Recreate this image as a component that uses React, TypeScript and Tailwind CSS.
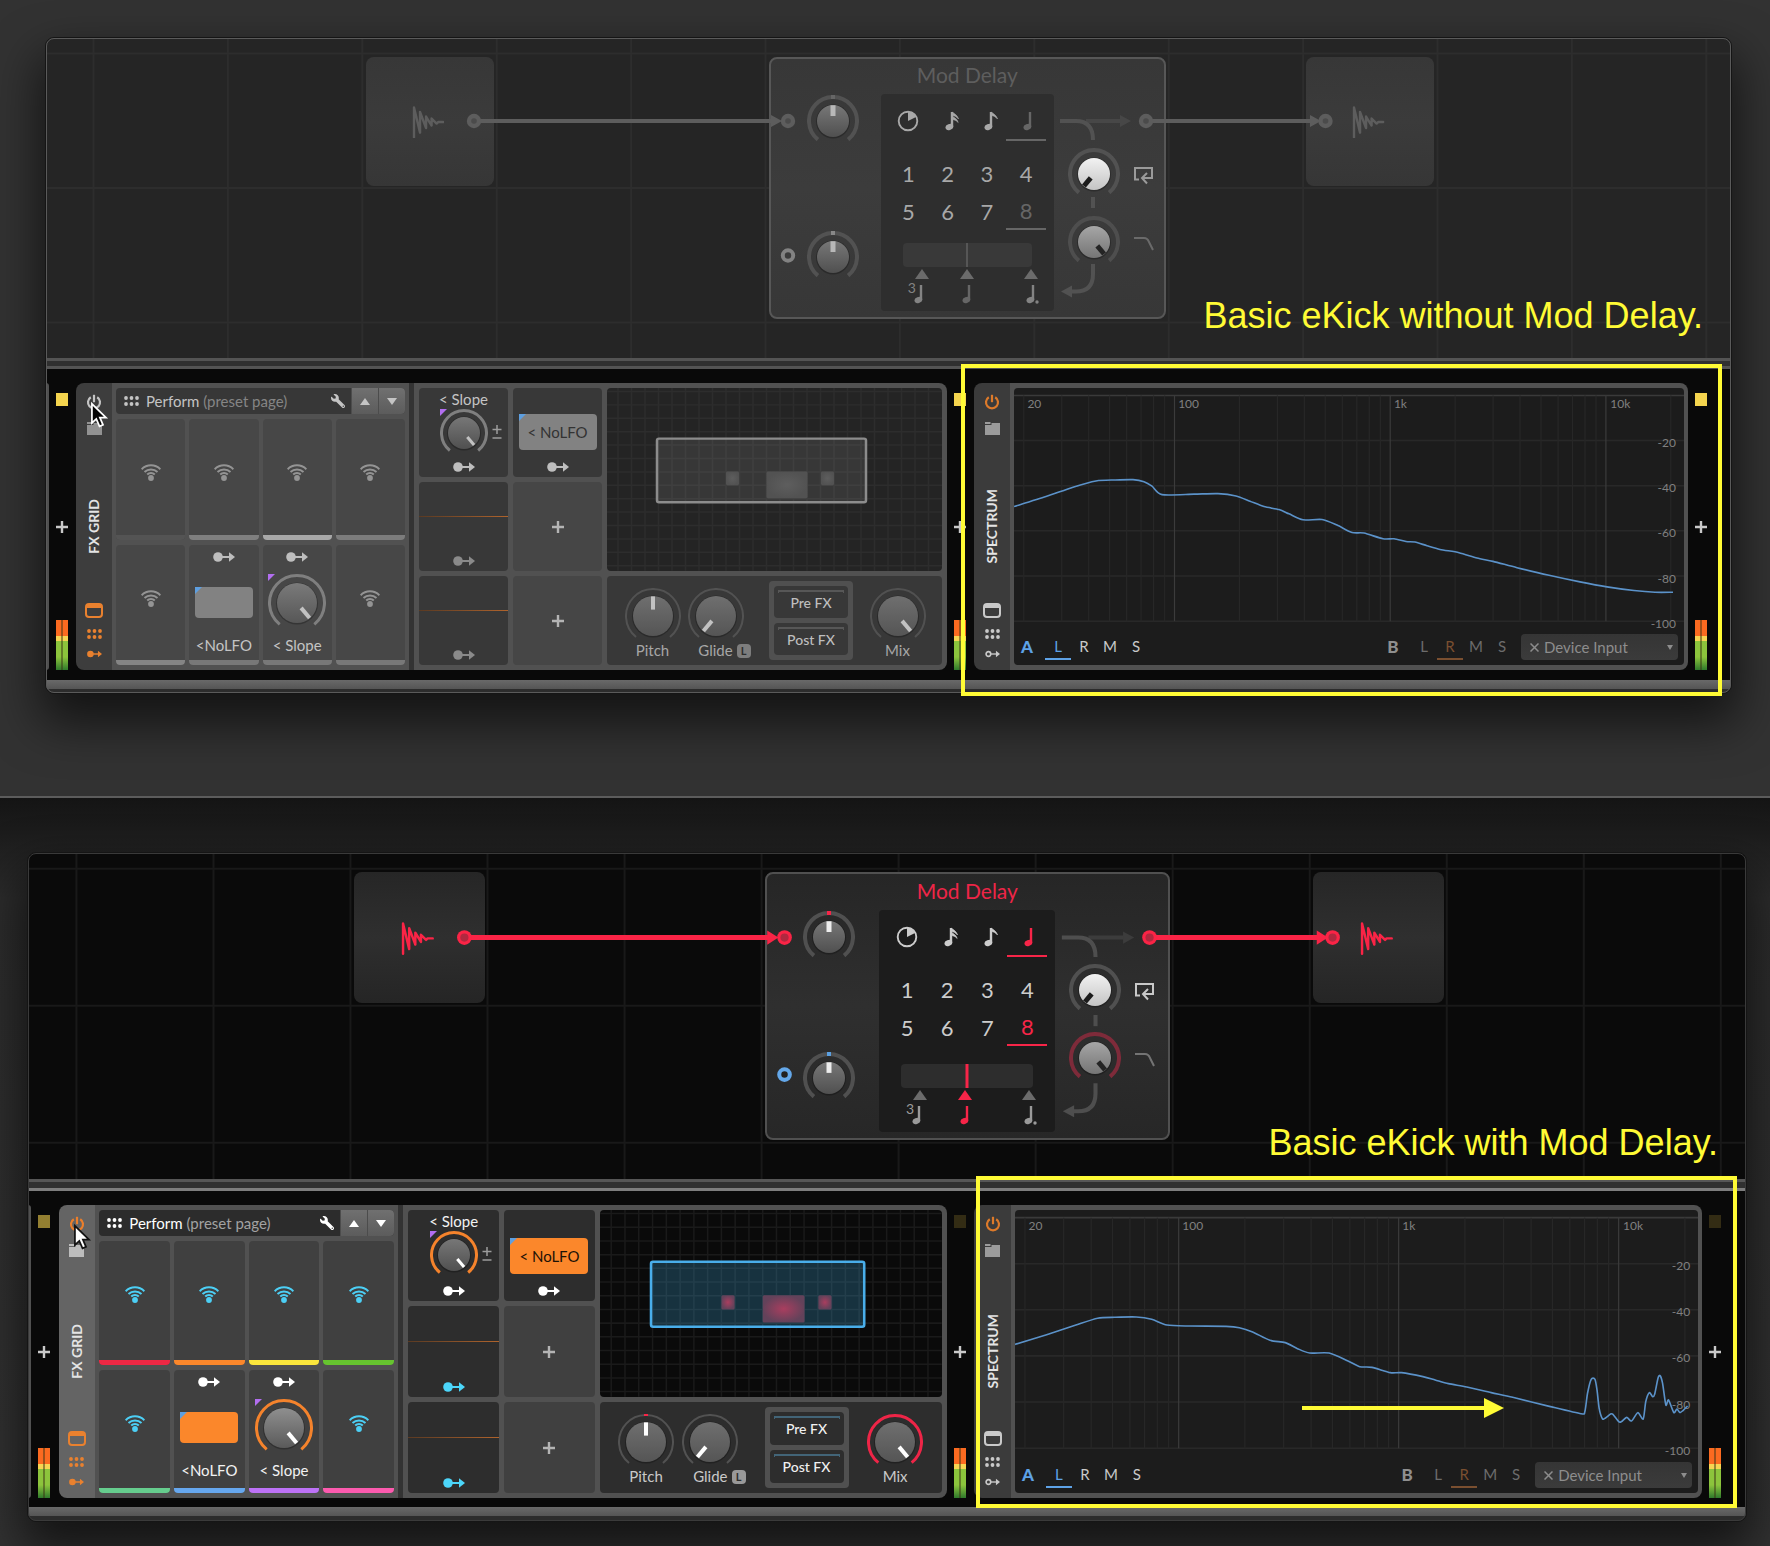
import { useId, type ReactNode } from "react";
import { FaWrench } from "react-icons/fa";

type Theme = {
  on: boolean;
  canvas: string;
  canvasHeight: string;
  deviceHeight: string;
  frame: string;
  gridLine: string;
  node: string;
  module: string;
  title: string;
  display: string;
  number: string;
  selected: string;
  underline: string;
  wire: string;
  portCore: string;
  modPort: string;
  modPortCore: string;
  flow: string;
  flowDim: string;
  rail: string;
  sidebar: string;
  header: string;
  headerText: string;
  pad: string;
  cell: string;
  addCell: string;
  wifi: string;
  modIcon: string;
  modIconIdle: string;
  toggle: string;
  toggleText: string;
  label: string;
  fxLabel: string;
  accent: string;
  pointer: string;
  red: string;
  filterRing: string;
  mixRing: string;
  gridBg: string;
  gridLines: string;
  view: string;
  viewFill: string;
  block: string;
  blockEdge: string;
  bars: string[];
  leds: string[];
  power: string;
};

const OFF: Theme = {
  on: false,
  canvas: "bg-[#252525]",
  canvasHeight: "h-[320px]",
  deviceHeight: "h-[287px]",
  frame: "border-[#5a5a5a]",
  gridLine: "#2d2d2d",
  node: "bg-linear-to-b from-[#373737] via-[#3b3b3b] to-[#363636]",
  module: "border-[#575757] bg-linear-to-b from-[#373737] via-[#3c3c3c] to-[#373737]",
  title: "text-[#5e5e5e]",
  display: "bg-[#2e2e2e]",
  number: "text-[#a8a8a8]",
  selected: "text-[#666666]",
  underline: "border-[#666666]",
  wire: "#5d5d5d",
  portCore: "#4b4b4b",
  modPort: "#828282",
  modPortCore: "#3b3b3b",
  flow: "#525252",
  flowDim: "#474747",
  rail: "bg-[#545454]",
  sidebar: "bg-[#3d3d3d]",
  header: "bg-[#373737]",
  headerText: "text-[#c4c4c4]",
  pad: "bg-[#474747]",
  cell: "bg-[#383838]",
  addCell: "bg-[#464646]",
  wifi: "text-[#949494]",
  modIcon: "text-[#bebebe]",
  modIconIdle: "text-[#8a8a8a]",
  toggle: "bg-[#828282]",
  toggleText: "text-[#333333]",
  label: "text-[#c4c4c4]",
  fxLabel: "text-[#a6a6a6]",
  accent: "#7f7f7f",
  pointer: "#c2c2c2",
  red: "#565656",
  filterRing: "#4e4e4e",
  mixRing: "#515151",
  gridBg: "bg-[#242424]",
  gridLines: "#2d2d2d",
  view: "#8c8c8c",
  viewFill: "rgba(255,255,255,0.09)",
  block: "#5e5e5e",
  blockEdge: "#525252",
  bars: ["bg-[#545454]", "bg-[#7f7f7f]", "bg-[#a8a8a8]", "bg-[#7c7c7c]", "bg-[#858585]", "bg-[#787878]", "bg-[#787878]", "bg-[#787878]"],
  leds: ["bg-[#f4d44e]", "bg-[#f4d44e]", "bg-[#f4d44e]"],
  power: "text-[#c4c4c4]",
};

const ON: Theme = {
  on: true,
  canvas: "bg-[#0a0a0a]",
  canvasHeight: "h-[326px]",
  deviceHeight: "h-[293px]",
  frame: "border-[#3a3a3a]",
  gridLine: "#191919",
  node: "bg-linear-to-b from-[#262626] via-[#2f2f2f] to-[#252525]",
  module: "border-[#505050] bg-linear-to-b from-[#262626] via-[#2f2f2f] to-[#272727]",
  title: "text-[#ee2547]",
  display: "bg-[#1c1c1c]",
  number: "text-[#cccccc]",
  selected: "text-[#f72548]",
  underline: "border-[#f72548]",
  wire: "#fa2446",
  portCore: "#b1283f",
  modPort: "#64a8ea",
  modPortCore: "#222222",
  flow: "#4e4e4e",
  flowDim: "#3c3c3c",
  rail: "bg-[#7d7d7d]",
  sidebar: "bg-[#646464]",
  header: "bg-[#2c2c2c]",
  headerText: "text-white",
  pad: "bg-[#404040]",
  cell: "bg-[#2d2d2d]",
  addCell: "bg-[#404040]",
  wifi: "text-[#4ccff5]",
  modIcon: "text-white",
  modIconIdle: "text-[#4cd6fa]",
  toggle: "bg-[#fb872b]",
  toggleText: "text-[#1c1206]",
  label: "text-[#f2f2f2]",
  fxLabel: "text-[#c9c9c9]",
  accent: "#f5832c",
  pointer: "#ffffff",
  red: "#f72548",
  filterRing: "#7e2b3a",
  mixRing: "#ee2547",
  gridBg: "bg-[#0a0a0a]",
  gridLines: "#1a1a1a",
  view: "#49aeea",
  viewFill: "rgba(60,165,215,0.26)",
  block: "#a93e5f",
  blockEdge: "#63425a",
  bars: ["bg-[#ee2844]", "bg-[#fb872b]", "bg-[#fbe63c]", "bg-[#66c42f]", "bg-[#66cd8e]", "bg-[#66a7ee]", "bg-[#bd72f7]", "bg-[#fc5aae]"],
  leds: ["bg-[#937f31]", "bg-[#332c14]", "bg-[#332c14]"],
  power: "text-[#ec7f2b]",
};

/* ---------- icons ---------- */

const ModArrow = ({ className = "", hollow = false, small = false }: { className?: string; hollow?: boolean; small?: boolean }) => (
  <svg viewBox="0 0 22 10" width={small ? 15 : 22} height={small ? 8 : 10} className={className} aria-hidden="true">
    <circle cx="5" cy="5" r={hollow ? 3.4 : 4.8} fill={hollow ? "none" : "currentColor"} stroke="currentColor" strokeWidth={hollow ? 2.4 : 0} />
    <path d="M8.5 5H17" stroke="currentColor" strokeWidth="2" />
    <path d="M16 0.2L22 5L16 9.8Z" fill="currentColor" />
  </svg>
);

const Wifi = ({ className }: { className: string }) => (
  <svg viewBox="0 0 20 17" width="20" height="17" className={className} aria-hidden="true">
    <g fill="none" stroke="currentColor" strokeWidth="2">
      <path d="M0.6 5.2A13.4 13.4 0 0 1 19.4 5.2" />
      <path d="M3.5 8A9.4 9.4 0 0 1 16.5 8" />
      <path d="M6.2 10.6A5.6 5.6 0 0 1 13.8 10.6" />
    </g>
    <circle cx="10" cy="14" r="2.9" fill="currentColor" />
  </svg>
);

const Dots = ({ className = "" }: { className?: string }) => (
  <svg viewBox="0 0 15 10" width="15" height="10" className={className} aria-hidden="true">
    {[2, 7.5, 13].map((x) => [2, 8].map((y) => <circle key={`${x}-${y}`} cx={x} cy={y} r="1.9" fill="currentColor" />))}
  </svg>
);

const Power = () => (
  <svg viewBox="0 0 16 16" width="16" height="16" aria-hidden="true">
    <path d="M4.8 3.2A6 6 0 1 0 11.2 3.2" fill="none" stroke="currentColor" strokeWidth="2.2" />
    <path d="M8 0.8V8.2" stroke="currentColor" strokeWidth="2.2" />
  </svg>
);

const Folder = () => (
  <svg viewBox="0 0 15 13" width="15" height="13" aria-hidden="true">
    <path d="M0 0H5.5V2H0Z M0 3H6.5V1H15V13H0Z" fill="currentColor" />
  </svg>
);

const Panel = () => (
  <svg viewBox="0 0 18 15" width="18" height="15" aria-hidden="true">
    <rect x="1" y="1" width="16" height="13" rx="3" fill="none" stroke="currentColor" strokeWidth="2" />
    <path d="M2 1.5H16V5H2Z" fill="currentColor" />
  </svg>
);

const Plus = ({ className = "" }: { className?: string }) => (
  <svg viewBox="0 0 12 12" width="12" height="12" className={className} aria-hidden="true">
    <path d="M6 0V12M0 6H12" stroke="currentColor" strokeWidth="2.4" />
  </svg>
);

const Wave = ({ color, className }: { color: string; className: string }) => (
  <svg viewBox="0 0 32 32" className={className} aria-hidden="true">
    <path d="M2 31V1.5L8 26.5V6L14 22V10.5L19.5 19.5V12.5L24.5 17.5L26 16H31" fill="none" stroke={color} strokeWidth="2.4" strokeLinejoin="round" strokeLinecap="round" />
  </svg>
);

const Note = ({ flags = 0, dot = false, triplet = false }: { flags?: number; dot?: boolean; triplet?: boolean }) => (
  <span className="relative flex">
    {triplet && <span className="absolute right-full -top-1 -mr-0.5 text-sm leading-4">3</span>}
    <svg viewBox="0 0 14 20" width="14" height="20" className="-mr-1" aria-hidden="true">
      <ellipse cx="4.4" cy="16" rx="4" ry="3" fill="currentColor" transform="rotate(-22 4.4 16)" />
      <path d="M7 1V15.5" stroke="currentColor" strokeWidth="2.4" />
      {flags > 0 && <path d="M7 1C9 2.5 12.5 4 13.5 8C11.5 5.5 9.5 5 8 4.5Z" fill="currentColor" stroke="currentColor" strokeWidth="0.6" />}
      {flags > 1 && <path d="M7 5C9 6.5 12.5 8 13.2 11.5C11.5 9.5 9.5 9 8 8.5Z" fill="currentColor" stroke="currentColor" strokeWidth="0.6" />}
      {dot && <circle cx="11" cy="18" r="1.7" fill="currentColor" />}
    </svg>
  </span>
);

const Clock = () => (
  <svg viewBox="0 0 22 22" width="22" height="22" aria-hidden="true">
    <circle cx="11" cy="11" r="9.3" fill="none" stroke="currentColor" strokeWidth="1.9" />
    <path d="M11 11V2A9 9 0 0 1 19 7Z" fill="currentColor" />
  </svg>
);

const Cursor = ({ dark }: { dark: boolean }) => (
  <svg viewBox="-1.5 -2.5 17 26" width="20" height="30" className="pointer-events-none absolute left-[14px] top-[18px] z-10" aria-hidden="true">
    <path d="M0 0V16.5L3.8 13L6.6 19.5L9.6 18.2L6.9 11.9H12.2Z" fill={dark ? "#050505" : "#ffffff"} stroke={dark ? "#ffffff" : "#111111"} strokeWidth="1.5" />
  </svg>
);

/* ---------- knob ---------- */

const polar = (c: number, r: number, deg: number) => {
  const a = ((deg - 90) * Math.PI) / 180;
  return [c + r * Math.cos(a), c + r * Math.sin(a)].map((v) => v.toFixed(2)).join(" ");
};

type KnobProps = {
  label: string;
  size: number;
  dial: number;
  angle: number;
  ring: string;
  ringWidth: number;
  pointer: string;
  pointerWidth: number;
  shades: [string, string];
  mark?: string;
};

function Knob({ label, size, dial, angle, ring, ringWidth, pointer, pointerWidth, shades, mark }: KnobProps) {
  const id = useId();
  const c = size / 2;
  const r = c - ringWidth / 2;
  return (
    <label className="relative block shrink-0">
      <svg viewBox={`0 0 ${size} ${size}`} width={size} height={size} className="block" aria-hidden="true">
        <defs>
          <linearGradient id={id} x1="0" y1="0" x2="0" y2="1">
            <stop offset="0" stopColor={shades[0]} />
            <stop offset="1" stopColor={shades[1]} />
          </linearGradient>
        </defs>
        <path d={`M${polar(c, r, -141)}A${r} ${r} 0 1 1 ${polar(c, r, 141)}`} fill="none" stroke={ring} strokeWidth={ringWidth} />
        {mark && <path d={`M${c - 2} ${ringWidth / 2}H${c + 2}`} stroke={mark} strokeWidth={ringWidth} />}
        <circle cx={c} cy={c + 0.5} r={dial + 1} fill="#000000" opacity="0.25" />
        <circle cx={c} cy={c} r={dial} fill={`url(#${id})`} />
        <path d={`M${polar(c, dial * 0.32, angle)}L${polar(c, dial * 0.98, angle)}`} stroke={pointer} strokeWidth={pointerWidth} />
      </svg>
      <input type="range" min={-140} max={140} defaultValue={angle} aria-label={label} className="absolute inset-0 h-full w-full cursor-pointer opacity-0" />
    </label>
  );
}

const GRAY: [string, string] = ["#777777", "#505050"];

/* ---------- canvas ---------- */

const FEELS = [
  { name: "Triplet", gap: "ml-[26px]" },
  { name: "Straight", gap: "ml-[31px]" },
  { name: "Dotted", gap: "ml-[50px]" },
];

function ModDelay({ t }: { t: Theme }) {
  const small = { size: 52, dial: 16, ringWidth: 4, pointerWidth: 5 };
  const ring = t.on ? "#505050" : "#525252";
  return (
    <section className={`absolute left-[42.9%] top-[5.9%] grid h-[82%] w-[23.55%] grid-rows-[36fr_220fr_6fr] rounded-lg border-2 ${t.module}`}>
      <h2 className={`flex items-center justify-center pb-1 text-[21px] leading-none ${t.title}`}>Mod Delay</h2>
      <div className="grid grid-cols-[110fr_173fr_110fr]">
        <div className="flex flex-col justify-between pb-7 pl-[36px] pt-px">
          <Knob label="Delay time offset" {...small} angle={0} ring={ring} pointer={t.on ? "#ededed" : "#b8b8b8"} shades={GRAY} mark={t.on ? t.red : "#666666"} />
          <Knob label="Modulation amount" {...small} angle={0} ring={ring} pointer={t.on ? "#ededed" : "#b8b8b8"} shades={GRAY} mark={t.on ? "#5b9fe0" : "#888888"} />
        </div>
        <div className={`flex flex-col rounded px-2 pt-[7px] ${t.display} ${t.number}`}>
          <div className="grid grid-cols-4">
            <button type="button" aria-label="Time in seconds" className="flex h-10 items-center justify-center"><Clock /></button>
            <button type="button" aria-label="Sixteenth notes" className="flex h-10 items-center justify-center pl-1"><Note flags={2} /></button>
            <button type="button" aria-label="Eighth notes" className="flex h-10 items-center justify-center pl-1"><Note flags={1} /></button>
            <button type="button" aria-label="Quarter notes" aria-pressed="true" className={`flex h-10 items-center justify-center border-b-2 pl-1 pt-0.5 ${t.selected} ${t.underline}`}><Note /></button>
          </div>
          <div className="mt-[13px] grid grid-cols-4 text-[22px]">
            {[1, 2, 3, 4, 5, 6, 7, 8].map((n) => (
              <button key={n} type="button" aria-pressed={n === 8} className={`flex h-[38px] items-center justify-center ${n === 8 ? `border-b-2 ${t.selected} ${t.underline}` : ""}`}>{n}</button>
            ))}
          </div>
          <label className={`relative mx-3.5 mt-auto flex h-6 justify-center rounded ${t.on ? "bg-[#2d2d2d]" : "bg-[#393939]"}`}>
            <svg viewBox="0 0 4 24" width="4" height="24" aria-hidden="true"><path d="M2 0V24" stroke={t.red} strokeWidth={t.on ? 3 : 2} /></svg>
            <input type="range" aria-label="Time scale" className="absolute inset-0 w-full cursor-pointer opacity-0" />
          </label>
          <div className={`flex pb-[7px] pt-0.5 ${t.on ? "text-[#9a9a9a]" : "text-[#838383]"}`}>
            {FEELS.map(({ name, gap }, i) => (
              <button key={name} type="button" aria-label={name} className={`flex w-3.5 flex-col items-center ${gap} ${i === 1 ? t.selected : ""}`}>
                <svg viewBox="0 0 14 10" width="14" height="10" aria-hidden="true"><path d="M7 0L14 10H0Z" fill={i === 1 && t.on ? t.red : "#6b6b6b"} /></svg>
                <span className={i === 0 ? "mt-[5px] mr-1.5" : "mt-[5px]"}><Note triplet={i === 0} dot={i === 2} /></span>
              </button>
            ))}
          </div>
        </div>
        <div className="flex flex-col gap-4 pl-3.5 pt-[54px]">
          <div className="flex items-center gap-3.5">
            <Knob label="Feedback" {...small} angle={-140} ring={ring} pointer="#1c1c1c" shades={["#f2f2f2", "#c4c4c4"]} />
            <svg viewBox="0 0 19 18" width="19" height="18" className="mt-1 shrink-0" aria-hidden="true">
              <path d="M5 12.5H1V1H18V11H8.5M13 6L8 11L13 16.5" fill="none" stroke={t.on ? "#c9c9c9" : "#9a9a9a"} strokeWidth="2" />
            </svg>
          </div>
          <div className="flex items-center gap-3.5">
            <Knob label="Filter" {...small} angle={140} ring={t.filterRing} pointer="#242424" shades={["#a6a6a6", "#757575"]} />
            <svg viewBox="0 0 20 14" width="20" height="14" className="mt-1 shrink-0" aria-hidden="true">
              <path d="M0 1H10Q13.5 1 15 5L19 13" fill="none" stroke={t.on ? "#747474" : "#6a6a6a"} strokeWidth="2" />
            </svg>
          </div>
        </div>
      </div>
    </section>
  );
}

function PatchCanvas({ t, caption }: { t: Theme; caption: string }) {
  const w = t.on ? 5 : 4;
  const head = t.on ? 7 : 6;
  const core = t.on ? 4 : 2.8;
  return (
    <div className={`relative overflow-hidden ${t.canvas} ${t.canvasHeight}`}>
      <svg viewBox="0 0 1685 320" preserveAspectRatio="none" className="absolute inset-0 h-full w-full" aria-hidden="true">
        <g stroke={t.gridLine} strokeWidth="2">
          {Array.from({ length: 13 }, (_, i) => <path key={i} d={`M${47.5 + i * 134.4} 0V320`} />)}
          {[15.5, 150, 284.5].map((y) => <path key={y} d={`M0 ${y}H1685`} />)}
        </g>
      </svg>
      <div className={`absolute left-[19%] top-[5.9%] h-[40.2%] w-[7.6%] rounded-lg ${t.node}`}>
        <Wave color={t.on ? t.wire : "#5d5d5d"} className="absolute left-[36%] top-[38%] h-[25%]" />
      </div>
      <div className={`absolute left-[74.8%] top-[5.9%] h-[40.2%] w-[7.6%] rounded-lg ${t.node}`}>
        <Wave color={t.on ? t.wire : "#5d5d5d"} className="absolute left-[36%] top-[38%] h-[25%]" />
      </div>
      <ModDelay t={t} />
      <svg viewBox="0 0 1685 320" preserveAspectRatio="none" className="pointer-events-none absolute inset-0 h-full w-full" aria-hidden="true">
        <g fill="none" stroke={t.flow} strokeWidth="4">
          <path d="M1040 83H1076" stroke={t.flowDim} />
          <path d="M1014 83H1030Q1047 83 1047 102" />
          <path d="M1047 159V170" />
          <path d="M1047 226V236Q1047 253.5 1030 253.5H1022" />
        </g>
        <path d="M1074 77L1085 83L1074 89Z" fill={t.flowDim} />
        <path d="M1015 253.5L1026 247.5V259.5Z" fill={t.flow} />
        <g stroke={t.wire} strokeWidth={w}>
          <path d="M434 83H730M1106 83H1268" />
        </g>
        <path d={`M725 ${83 - head}L736 83L725 ${83 + head}ZM1264 ${83 - head}L1275 83L1264 ${83 + head}Z`} fill={t.wire} />
        {[428, 742, 1100, 1279.5].map((x) => (
          <g key={x}>
            <circle cx={x} cy="83" r="7.2" fill={t.wire} />
            <circle cx={x} cy="83" r={core} fill={t.portCore} />
          </g>
        ))}
        <circle cx="742" cy="217.5" r="5.2" fill={t.modPortCore} stroke={t.modPort} strokeWidth="4" />
      </svg>
      <p className={`absolute right-7 font-[Liberation_Sans,Arial,sans-serif] text-[36px] leading-10 text-[#fffb35] ${t.on ? "bottom-4" : "bottom-[22px]"}`}>{caption}</p>
    </div>
  );
}

/* ---------- rack ---------- */

function Lane({ led }: { led: string }) {
  const id = useId();
  return (
    <div className="flex flex-col items-center justify-between pr-px pt-2.5">
      <span className={`h-[13px] w-3 ${led}`} />
      <button type="button" aria-label="Add device" className="mt-[27px] text-[#c9c9c9]"><Plus /></button>
      <svg viewBox="0 0 12 50" width="12" height="50" role="img" aria-label="Level meter">
        <defs>
          <linearGradient id={id} x1="0" y1="0" x2="0" y2="1">
            <stop offset="0.55" stopColor="#8cc43c" />
            <stop offset="1" stopColor="#2f7a2c" />
          </linearGradient>
        </defs>
        <path d="M0 0H12V16H0Z" fill="#fb6a20" />
        <path d="M0 16H12V21H0Z" fill="#f7d452" />
        <path d="M0 21H12V50H0Z" fill={`url(#${id})`} />
        <path d="M6 0V50" stroke="#3a3414" strokeWidth="1" />
      </svg>
    </div>
  );
}

function SideBar({ name, bg, power, icons, hollow = false, folder, children }: { name: string; bg: string; power: string; icons: string; hollow?: boolean; folder: string; children?: ReactNode }) {
  return (
    <div className={`relative grid grid-rows-[1fr_auto_1fr] justify-items-center rounded-l-lg ${bg}`}>
      <div className="flex flex-col items-center gap-3 pt-[11px]">
        <button type="button" aria-label={`${name} power`} className={power}><Power /></button>
        <button type="button" aria-label={`${name} presets`} className={folder}><Folder /></button>
      </div>
      <h3 className="rotate-180 text-sm font-bold leading-5 text-[#e4e4e4] [writing-mode:vertical-rl]">{name}</h3>
      <div className={`flex flex-col items-center justify-end gap-[11px] pb-3 ${icons}`}>
        <button type="button" aria-label="Toggle panel"><Panel /></button>
        <button type="button" aria-label="Remote controls"><Dots /></button>
        <button type="button" aria-label="Modulators"><ModArrow small hollow={hollow} /></button>
      </div>
      {children}
    </div>
  );
}

const Corner = ({ color }: { color: string }) => (
  <svg viewBox="0 0 7 7" width="7" height="7" className="absolute left-0 top-0" aria-hidden="true"><path d="M0 0H7L0 7Z" fill={color} /></svg>
);

function Pads({ t }: { t: Theme }) {
  return (
    <div className="flex flex-col gap-[5px] bg-[#515151] px-1 py-[5px]">
      <div className={`flex h-[26px] shrink-0 items-center overflow-hidden rounded ${t.header} ${t.headerText}`}>
        <Dots className="ml-2 shrink-0" />
        <p className="ml-[7px] flex-1 whitespace-nowrap text-[15px]">Perform <span className={t.on ? "text-[#a2a2a2]" : "text-[#858585]"}>(preset page)</span></p>
        <button type="button" aria-label="Edit page" className="mr-1.5"><FaWrench className="-scale-x-100" size={14} /></button>
        {["M5 0L10 7H0Z", "M5 7L10 0H0Z"].map((d, i) => (
          <button key={d} type="button" aria-label={i ? "Next page" : "Previous page"} className="flex h-full w-[27px] items-center justify-center border-l border-[#4c4c4c] bg-linear-to-b from-[#707070] to-[#5c5c5c]">
            <svg viewBox="0 0 10 7" width="10" height="7" aria-hidden="true"><path d={d} fill="currentColor" /></svg>
          </button>
        ))}
      </div>
      <div className="grid flex-1 grid-cols-4 grid-rows-2 gap-x-1 gap-y-[5px]">
        {t.bars.map((bar, i) => (
          <div key={i} className={`relative flex flex-col items-center overflow-hidden rounded ${t.pad}`}>
            {i === 5 || i === 6 ? (
              <>
                <ModArrow className={`mt-[7px] shrink-0 ${t.modIcon}`} />
                <div className="relative mt-3 flex h-[58px] shrink-0 items-center">
                  {i === 5 ? (
                    <button type="button" aria-label="NoLFO" className={`relative h-[31px] w-[58px] rounded-sm ${t.toggle}`}><Corner color="#5e9fe0" /></button>
                  ) : (
                    <>
                      <Corner color="#b26ef0" />
                      <Knob label="Slope" size={58} dial={20} angle={140} ring={t.accent} ringWidth={3} pointer={t.pointer} pointerWidth={4} shades={t.on ? ["#8f8f8f", "#5a5a5a"] : ["#7a7a7a", "#575757"]} />
                    </>
                  )}
                </div>
                <span className={`mt-[3px] whitespace-nowrap text-[15px] leading-5 ${t.label}`}>{i === 5 ? "<NoLFO" : "< Slope"}</span>
              </>
            ) : (
              <Wifi className={`mt-[45px] ${t.wifi}`} />
            )}
            <span className={`absolute inset-x-0 bottom-0 h-[5px] ${bar}`} />
          </div>
        ))}
      </div>
    </div>
  );
}

function Modulators({ t }: { t: Theme }) {
  const id = useId();
  const curve = (
    <div className={`relative flex flex-col items-center justify-end rounded pb-[5px] ${t.cell}`}>
      <span className="absolute inset-x-0 top-[38%] h-px bg-linear-to-r from-[#5a3a22] to-[#b0642c]" />
      <ModArrow className={t.modIconIdle} />
    </div>
  );
  const add = (
    <button type="button" aria-label="Add modulator" className={`flex items-center justify-center rounded text-[#b4b4b4] ${t.addCell}`}><Plus /></button>
  );
  return (
    <>
      <div className="grid grid-cols-2 grid-rows-3 gap-x-[5px] gap-y-[5px]">
        <div className={`relative flex flex-col items-center rounded pt-0.5 ${t.cell} ${t.label}`}>
          <span className="text-[15px] leading-[19px]">&lt; Slope</span>
          <div className="relative">
            <Corner color="#b26ef0" />
            <Knob label="Slope amount" size={48} dial={16} angle={140} ring={t.accent} ringWidth={3} pointer={t.pointer} pointerWidth={3} shades={GRAY} />
            <svg viewBox="0 0 10 14" width="10" height="14" className="absolute -right-3.5 top-4 text-[#9c9c9c]" aria-hidden="true">
              <path d="M5 0V9M0.5 4.5H9.5M0.5 13H9.5" stroke="currentColor" strokeWidth="1.5" />
            </svg>
          </div>
          <ModArrow className={`mt-auto mb-[5px] ${t.modIcon}`} />
        </div>
        <div className={`flex flex-col items-center justify-end rounded pb-[5px] ${t.cell}`}>
          <button type="button" className={`relative mb-3 h-9 w-[78px] rounded text-[15px] ${t.toggle} ${t.toggleText}`}><Corner color="#5e9fe0" />&lt; NoLFO</button>
          <ModArrow className={t.modIcon} />
        </div>
        {curve}
        {add}
        {curve}
        {add}
      </div>
      <div className="grid grid-rows-[184fr_90fr] gap-[5px]">
        <div className={`relative overflow-hidden rounded ${t.gridBg}`}>
          <svg viewBox="0 0 335 184" preserveAspectRatio="none" className="absolute inset-0 h-full w-full" role="img" aria-label="Patch overview">
            <defs>
              <radialGradient id={id}>
                <stop offset="0" stopColor={t.block} />
                <stop offset="1" stopColor={t.blockEdge} />
              </radialGradient>
            </defs>
            <g stroke={t.gridLines} strokeWidth="1.5">
              {Array.from({ length: 24 }, (_, i) => <path key={i} d={`M${11 + i * 13.5} 0V184`} />)}
              {Array.from({ length: 14 }, (_, i) => <path key={i} d={`M0 ${3.5 + i * 13.5}H335`} />)}
            </g>
            <rect x="50" y="51" width="209" height="64" rx="2" fill={t.viewFill} stroke={t.view} strokeWidth="2.5" />
            <rect x="119" y="84" width="13" height="14" rx="1.5" fill={`url(#${id})`} />
            <rect x="159.5" y="84" width="41" height="27" rx="1.5" fill={`url(#${id})`} />
            <rect x="214" y="84" width="13" height="14" rx="1.5" fill={`url(#${id})`} />
          </svg>
        </div>
        <div className={`grid grid-cols-[63fr_63fr_195fr] rounded pl-3.5 text-[15px] leading-5 ${t.cell} ${t.fxLabel}`}>
          {["Pitch", "Glide"].map((name) => (
            <div key={name} className="flex flex-col items-center pt-3">
              <Knob label={name} size={56} dial={20} angle={name === "Pitch" ? 0 : -140} ring="#525252" ringWidth={2} pointer={t.pointer} pointerWidth={4} shades={["#6f6f6f", "#555555"]} mark={t.on && name === "Pitch" ? t.red : undefined} />
              <span className="relative -mt-1">
                {name}
                {name === "Glide" && <button type="button" aria-label="Legato" className={`absolute left-full top-1 ml-1 flex h-3.5 w-3.5 items-center justify-center rounded text-[11px] font-bold text-[#2d2d2d] ${t.on ? "bg-[#999999]" : "bg-[#7d7d7d]"}`}>L</button>}
              </span>
            </div>
          ))}
          <div className="flex pl-[22px]">
            <div className="my-[5px] flex w-[84px] shrink-0 flex-col gap-[5px] rounded bg-[#505050] p-[5px]">
              {["Pre FX", "Post FX"].map((name) => (
                <button key={name} type="button" className={`relative flex flex-1 items-center justify-center rounded pt-0.5 text-sm font-medium ${t.cell} ${t.on ? "text-[#f0f0f0]" : "text-[#bebebe]"}`}>
                  <span className={`absolute inset-x-1 top-1 h-[3px] border-x border-t-2 ${t.on ? "border-[#426477]" : "border-[#575757]"}`} />
                  {name}
                </button>
              ))}
            </div>
            <div className="flex flex-1 flex-col items-center pt-3">
              <Knob label="Mix" size={56} dial={20} angle={140} ring={t.mixRing} ringWidth={t.on ? 3 : 2} pointer={t.pointer} pointerWidth={4} shades={["#6f6f6f", "#555555"]} />
              <span className="-mt-1">Mix</span>
            </div>
          </div>
        </div>
      </div>
    </>
  );
}

type Pt = [number, number];

const DRY: Pt[] = [[0, 119], [32, 109], [59, 99.5], [82, 93.3], [101, 92.3], [119, 92], [130, 94], [138, 98.5], [148, 107], [180, 106.5], [204, 106], [222, 108.3], [236, 113.6], [250, 119], [265, 122], [275, 126.3], [289, 132.3], [308, 132], [323, 137.6], [338, 145], [350, 145.6], [369, 151.3], [380, 151.3], [392, 154], [401, 154.6], [413, 158.3], [426, 162], [445, 165.3], [463, 170.6], [479, 174], [503, 180.3], [535, 188], [566, 194.6], [593, 199.6], [620, 203.3], [641, 205], [659, 205]];

const WET: Pt[] = [[0, 132], [31, 122.5], [59, 113.3], [81, 106.4], [98, 105.4], [119, 105.1], [134, 107.4], [149, 113], [171, 114], [207, 114.3], [220, 115.6], [233, 119.8], [250, 128], [265, 130.3], [277, 136.2], [289, 140.5], [308, 140.5], [326, 148], [338, 153.9], [350, 154.6], [368, 159.8], [379, 159.8], [400, 163.7], [412, 167], [425, 170.6], [443, 173.9], [467, 179.4], [488, 184], [524, 192.9], [555, 200.1], [558.8, 198], [561.4, 180], [565, 166.3], [568.7, 166.3], [570.7, 176.8], [572.8, 194.8], [576, 205], [579, 204.3], [584, 200.4], [586.3, 200.7], [592, 207.9], [594.6, 207.9], [599.8, 203.7], [604.5, 207.3], [610.7, 199.1], [616, 205.3], [618.5, 188.3], [622, 179.4], [625.3, 183.4], [627.3, 180.7], [630.5, 165.3], [632.5, 162.7], [635, 170.3], [638.2, 191.6], [640.8, 186.6], [646, 199], [649, 195.5], [652, 199], [655, 197], [659.5, 192.5]];

const smooth = (pts: Pt[]) =>
  pts.slice(1).reduce((d, p, i) => {
    const a = pts[Math.max(i - 1, 0)];
    const b = pts[i];
    const n = pts[Math.min(i + 2, pts.length - 1)];
    const k = 8;
    return `${d}C${b[0] + (p[0] - a[0]) / k} ${b[1] + (p[1] - a[1]) / k} ${p[0] - (n[0] - b[0]) / k} ${p[1] - (n[1] - b[1]) / k} ${p[0]} ${p[1]}`;
  }, `M${pts[0][0]} ${pts[0][1]}`);

const FREQS = [20, 30, 40, 50, 60, 70, 80, 90, 100, 200, 300, 400, 500, 600, 700, 800, 900, 1000, 2000, 3000, 4000, 5000, 6000, 7000, 8000, 9000, 10000, 20000];

function Channels({ bank, active, bankColor, color, activeColor }: { bank: string; active: string; bankColor: string; color: string; activeColor: string }) {
  return (
    <div className="flex items-center">
      <span className={`mr-2 w-5 text-center text-[17px] font-black ${bankColor}`}>{bank}</span>
      {["L", "R", "M", "S"].map((c) => (
        <button key={c} type="button" aria-pressed={c === active} className={`h-[26px] w-[26px] border-b-2 text-[15px] ${c === active ? activeColor : `border-transparent ${color}`}`}>{c}</button>
      ))}
    </div>
  );
}

function Spectrum({ t }: { t: Theme }) {
  return (
    <div className="flex min-w-0 rounded-r-lg bg-[#515151] px-1 py-[5px]">
      <div className="relative flex flex-1 flex-col justify-end rounded bg-[#1c1c1c] pb-[5px] pl-[3px] pr-1.5">
        <svg viewBox="0 0 670 278" preserveAspectRatio="none" className="absolute inset-0 h-full w-full" role="img" aria-label="Frequency spectrum">
          <path d="M0 7.5H670" stroke="#3a3a3a" strokeWidth="1.5" />
          {[52.7, 98, 143.3, 188.6, 234].map((y) => <path key={y} d={`M0 ${y}H670`} stroke="#282828" strokeWidth="1.5" />)}
          {FREQS.map((f) => {
            const x = 160.5 + 215.7 * Math.log10(f / 100);
            const major = f === 100 || f === 1000 || f === 10000;
            return <path key={f} d={`M${x} 7.5V234`} stroke={major ? "#3b3b3b" : "#272727"} strokeWidth="1.2" />;
          })}
        </svg>
        <div className="pointer-events-none absolute inset-0 text-xs leading-4 text-[#808080]">
          <span className="absolute left-[2%] top-2">20</span>
          <span className="absolute left-[24.5%] top-2">100</span>
          <span className="absolute left-[56.7%] top-2">1k</span>
          <span className="absolute left-[89%] top-2">10k</span>
          <span className="absolute right-2 top-[17%]">-20</span>
          <span className="absolute right-2 top-[33.3%]">-40</span>
          <span className="absolute right-2 top-[49.6%]">-60</span>
          <span className="absolute right-2 top-[66%]">-80</span>
          <span className="absolute right-2 top-[82.4%]">-100</span>
        </div>
        <svg viewBox="0 0 670 278" preserveAspectRatio="none" className="pointer-events-none absolute inset-0 h-full w-full" aria-hidden="true">
          <path d={smooth(t.on ? WET : DRY)} fill="none" stroke="#5b92c9" strokeWidth="1.6" strokeLinejoin="round" />
        </svg>
        <div className="relative flex items-center justify-between">
          <Channels bank="A" active="L" bankColor="text-[#5ea2e6]" color="text-[#c9c9c9]" activeColor="border-[#5ea2e6] text-[#5ea2e6]" />
          <div className="flex items-center gap-1.5">
            <Channels bank="B" active="R" bankColor="text-[#8f8f8f]" color="text-[#6c6c6c]" activeColor="border-[#7a4f30] text-[#7a4f30]" />
            <label className="relative flex h-[26px] w-[157px] items-center rounded bg-linear-to-b from-[#353535] to-[#3b3b3b] text-[#8d8d8d]">
              <svg viewBox="0 0 9 9" width="9" height="9" className="absolute left-[9px]" aria-hidden="true"><path d="M0.5 0.5L8.5 8.5M8.5 0.5L0.5 8.5" stroke="currentColor" strokeWidth="1.5" /></svg>
              <select aria-label="Source for B" className="h-full w-full appearance-none bg-transparent pl-[23px] text-[15px]">
                <option>Device Input</option>
              </select>
              <svg viewBox="0 0 6 5" width="6" height="5" className="pointer-events-none absolute right-[5px]" aria-hidden="true"><path d="M0 0H6L3 5Z" fill="currentColor" /></svg>
            </label>
          </div>
        </div>
      </div>
    </div>
  );
}

function DawWindow({ t, caption }: { t: Theme; caption: string }) {
  return (
    <article className="relative rounded-lg shadow-[0_24px_48px_6px_rgba(0,0,0,0.6)] outline outline-[#151515]">
      <div className="overflow-hidden rounded-lg">
        <PatchCanvas t={t} caption={caption} />
        <div className={`h-[3px] ${t.on ? "bg-[#565656]" : "bg-[#545454]"}`} />
        <div className={`bg-[#303030] ${t.on ? "h-[6px]" : "h-[5px]"}`} />
        <div className={`h-[3px] ${t.rail}`} />
        <div className={`grid grid-cols-[3fr_27fr_871fr_27fr_714fr_27fr_16fr] bg-[#090909] pt-3.5 ${t.on ? "pb-[9px]" : "pb-2.5"}`}>
          <div className="rounded-r border-r-2 border-[#505050]" />
          <Lane led={t.leds[0]} />
          <div className={`grid grid-cols-[36fr_297fr_5fr_533fr] ${t.deviceHeight}`}>
            <SideBar name="FX GRID" bg={t.sidebar} power={t.power} folder={t.on ? "text-[#bdbdbd]" : "text-[#929292]"} icons="text-[#e9812f]">
              <Cursor dark={!t.on} />
            </SideBar>
            <Pads t={t} />
            <div className="bg-[#333333]" />
            <div className="grid grid-cols-[183fr_335fr] gap-[5px] rounded-r-lg bg-[#515151] p-[5px]">
              <Modulators t={t} />
            </div>
          </div>
          <Lane led={t.leds[1]} />
          <div className={`grid grid-cols-[36fr_678fr] ${t.deviceHeight}`}>
            <SideBar name="SPECTRUM" bg="bg-[#3b3b3b]" power="text-[#dd7a2a]" folder="text-[#9b9b9b]" icons="text-[#c9c9c9]" hollow />
            <Spectrum t={t} />
          </div>
          <Lane led={t.leds[2]} />
          <div />
        </div>
        <div className="h-[9px] bg-linear-to-b from-[#696969] to-[#555555]" />
        <div className={`bg-[#2c2c2c] ${t.on ? "h-[5px]" : "h-1"}`} />
      </div>
      <div className={`pointer-events-none absolute inset-0 rounded-lg border ${t.frame}`} />
      {t.on ? (
        <div className="pointer-events-none absolute bottom-[13px] left-[55.2%] right-[9px] top-[323px] border-4 border-[#fffb35]">
          <svg viewBox="0 0 202 20" width="202" height="20" className="absolute left-[42.7%] top-[218px]" aria-hidden="true">
            <path d="M0 10H184" stroke="#fffb35" strokeWidth="4" />
            <path d="M182 0L202 10L182 20Z" fill="#fffb35" />
          </svg>
        </div>
      ) : (
        <div className="pointer-events-none absolute -bottom-[3px] left-[54.3%] right-[9px] top-[326px] border-4 border-[#fffb35]" />
      )}
    </article>
  );
}

export default function App() {
  return (
    <main className="min-h-screen bg-[#323232] font-[Lato,sans-serif]">
      <div className="overflow-hidden pb-[103px] pl-[46px] pr-[39px] pt-[38px]">
        <DawWindow t={OFF} caption="Basic eKick without Mod Delay." />
      </div>
      <div className="overflow-hidden border-t-2 border-[#5c5c5c] bg-linear-to-b from-[#141414] via-[#2c2c2c] via-[100px] to-[#323232] pb-[25px] pl-7 pr-6 pt-[55px]">
        <DawWindow t={ON} caption="Basic eKick with Mod Delay." />
      </div>
    </main>
  );
}
